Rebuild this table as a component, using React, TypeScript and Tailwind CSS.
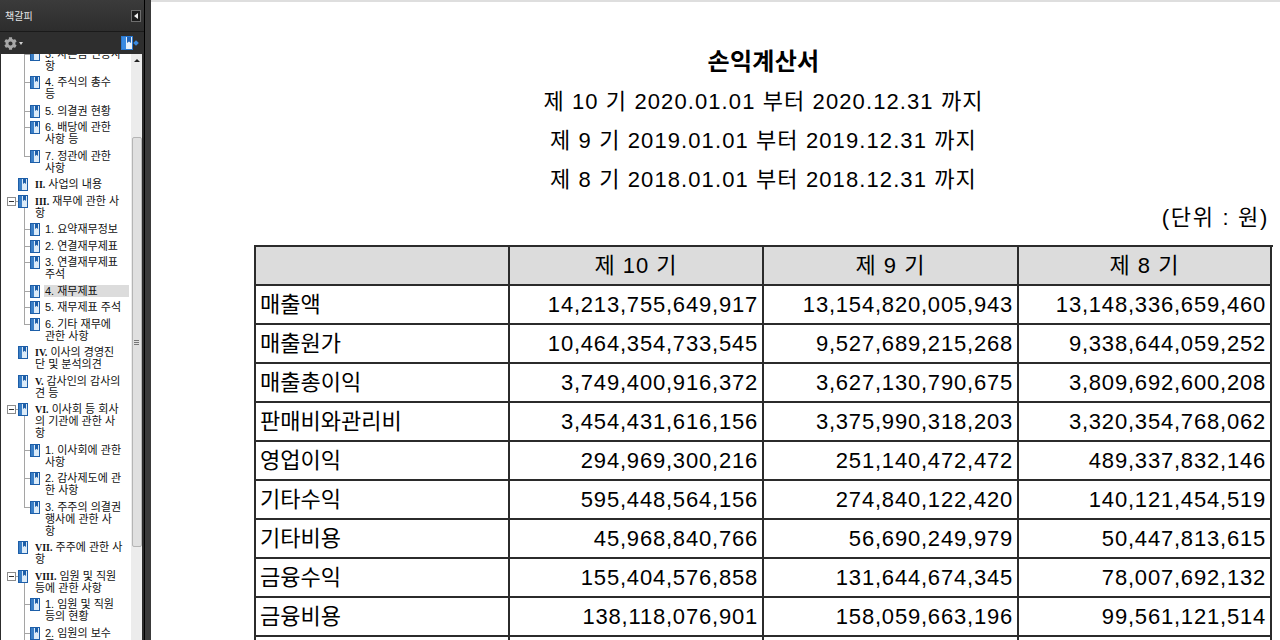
import { FaCog } from "react-icons/fa";

type Node = {
  lv: 1 | 2;
  lines: string[];
  roman?: string;
  exp?: boolean;
  sel?: boolean;
  last?: boolean;
};

const tree: Node[] = [
  { lv: 2, lines: ["3. 자본금 변동사", "항"] },
  { lv: 2, lines: ["4. 주식의 총수", "등"] },
  { lv: 2, lines: ["5. 의결권 현황"] },
  { lv: 2, lines: ["6. 배당에 관한", "사항 등"] },
  { lv: 2, lines: ["7. 정관에 관한", "사항"], last: true },
  { lv: 1, roman: "II.", lines: [" 사업의 내용"] },
  { lv: 1, roman: "III.", lines: [" 재무에 관한 사", "항"], exp: true },
  { lv: 2, lines: ["1. 요약재무정보"] },
  { lv: 2, lines: ["2. 연결재무제표"] },
  { lv: 2, lines: ["3. 연결재무제표", "주석"] },
  { lv: 2, lines: ["4. 재무제표"], sel: true },
  { lv: 2, lines: ["5. 재무제표 주석"] },
  { lv: 2, lines: ["6. 기타 재무에", "관한 사항"], last: true },
  { lv: 1, roman: "IV.", lines: [" 이사의 경영진", "단 및 분석의견"] },
  { lv: 1, roman: "V.", lines: [" 감사인의 감사의", "견 등"] },
  { lv: 1, roman: "VI.", lines: [" 이사회 등 회사", "의 기관에 관한 사", "항"], exp: true },
  { lv: 2, lines: ["1. 이사회에 관한", "사항"] },
  { lv: 2, lines: ["2. 감사제도에 관", "한 사항"] },
  { lv: 2, lines: ["3. 주주의 의결권", "행사에 관한 사", "항"], last: true },
  { lv: 1, roman: "VII.", lines: [" 주주에 관한 사", "항"] },
  { lv: 1, roman: "VIII.", lines: [" 임원 및 직원", "등에 관한 사항"], exp: true },
  { lv: 2, lines: ["1. 임원 및 직원", "등의 현황"] },
  { lv: 2, lines: ["2. 임원의 보수", "등"] },
  { lv: 2, lines: ["3. 임원의 주식매", "수선택권"] },
];

const rows = [
  ["매출액", "14,213,755,649,917", "13,154,820,005,943", "13,148,336,659,460"],
  ["매출원가", "10,464,354,733,545", "9,527,689,215,268", "9,338,644,059,252"],
  ["매출총이익", "3,749,400,916,372", "3,627,130,790,675", "3,809,692,600,208"],
  ["판매비와관리비", "3,454,431,616,156", "3,375,990,318,203", "3,320,354,768,062"],
  ["영업이익", "294,969,300,216", "251,140,472,472", "489,337,832,146"],
  ["기타수익", "595,448,564,156", "274,840,122,420", "140,121,454,519"],
  ["기타비용", "45,968,840,766", "56,690,249,979", "50,447,813,615"],
  ["금융수익", "155,404,576,858", "131,644,674,345", "78,007,692,132"],
  ["금융비용", "138,118,076,901", "158,059,663,196", "99,561,121,514"],
  ["법인세비용차감전순이익", "851,733,412,854", "341,875,262,846", "761,436,152,286"],
];

const BookIcon = () => (
  <div className="h-[12px] w-[10px] shrink-0 overflow-visible">
    <svg width="10" height="13" viewBox="0 0 10 13">
      <rect x="0.5" y="0.5" width="9" height="12" fill="#dcebf8" stroke="#1d5ea8" />
      <rect x="1" y="1" width="3" height="11" fill="#3b7fc6" />
      <path d="M5 1h3v5l-1.5-1.2L5 6z" fill="#1d5ea8" />
    </svg>
  </div>
);

const TreeRow = ({ n }: { n: Node }) => (
  <div className="relative flex pt-[2px] pb-[2.5px]">
    {n.lv === 2 && (
      <>
        <span
          className={
            n.last
              ? "absolute left-[23px] top-0 h-[8px] w-px bg-[#a5a5a5]"
              : "absolute left-[23px] top-0 bottom-0 w-px bg-[#a5a5a5]"
          }
        />
        <span className="absolute left-[23px] top-[8px] h-px w-[6px] bg-[#a5a5a5]" />
      </>
    )}
    {n.exp && (
      <>
        <span className="absolute left-[6px] top-[4px] flex h-[9px] w-[9px] items-center justify-center border border-[#8c8c8c] bg-white">
          <span className="h-px w-[5px] bg-[#333]" />
        </span>
        <span className="absolute left-[15px] top-[8px] h-px w-[2px] bg-[#a5a5a5]" />
        <span className="absolute left-[23px] top-[15px] bottom-0 w-px bg-[#a5a5a5]" />
      </>
    )}
    <div className={n.lv === 1 ? "flex gap-[6px] pl-[17px]" : "flex w-full gap-[4px] pl-[29px]"}>
      <BookIcon />
      <div
        className={
          n.sel
            ? "mr-[2px] flex-1 bg-[#dcdcdc] pl-[1px]"
            : "flex-1 pl-[1px]"
        }
      >
        {n.lines.map((l, i) => (
          <div key={i} className="h-[12px] overflow-visible whitespace-pre leading-[12px]">
            {i === 0 && n.roman && (
              <span className="font-[Liberation_Serif,serif] text-[10px] font-bold">{n.roman}</span>
            )}
            {l}
          </div>
        ))}
      </div>
    </div>
  </div>
);

export default function App() {
  return (
    <div className="flex h-[640px] w-[1280px] overflow-hidden bg-white font-[Liberation_Sans,Noto_Sans_CJK_KR,sans-serif] text-black">
      <aside className="flex w-[145px] shrink-0 flex-col border-r border-black bg-[#2c2c2c]">
        <div className="flex h-[32px] shrink-0 items-center justify-between border-b border-[#1a1a1a] bg-gradient-to-b from-[#3b3b3b] to-[#2d2d2d] pl-[5px] pr-[3px]">
          <span className="pt-px text-[10px] text-[#e8e8e8]">책갈피</span>
          <span className="flex h-[12px] w-[10px] items-center justify-center border border-[#6e6e6e] bg-[#1c1c1c]">
            <span className="h-0 w-0 border-y-[3px] border-r-[4px] border-y-transparent border-r-[#f0f0f0]" />
          </span>
        </div>
        <div className="flex h-[22px] shrink-0 items-center justify-between bg-[#2e2e2e] pl-[4px] pr-[6px]">
          <div className="flex items-center gap-[2px]">
            <FaCog className="text-[13px] text-[#a8a8a8]" />
            <span className="h-0 w-0 border-x-[2px] border-t-[3px] border-x-transparent border-t-[#d0d0d0]" />
          </div>
          <div className="flex items-center gap-[1px]">
            <svg width="12" height="14" viewBox="0 0 12 14">
              <rect x="0.5" y="0.5" width="11" height="13" fill="#e6f0fa" stroke="#2a78d0" />
              <rect x="1" y="1" width="4" height="12" fill="#3a8ae0" />
              <path d="M6 1h4v6l-2-1.5L6 7z" fill="#1f62b5" />
            </svg>
            <span className="h-[4px] w-[4px] rotate-45 bg-[#3a8ae0]" />
          </div>
        </div>
        <div className="flex min-h-0 flex-1 pl-px pr-[2px]">
          <div className="w-[130px] overflow-hidden bg-white text-[11px] text-[#111]">
            <div className="-mt-[8.5px]">
              {tree.map((n, i) => (
                <TreeRow key={i} n={n} />
              ))}
            </div>
          </div>
          <div className="flex w-[11px] flex-col items-center bg-[#ececec]">
            <div className="flex h-[12px] items-center justify-center">
              <span className="h-0 w-0 border-x-[3px] border-b-[3px] border-x-transparent border-b-[#222]" />
            </div>
            <div className="h-[71px]" />
            <div className="flex h-[410px] w-[10px] items-center justify-center rounded-[2px] border border-[#b5b5b5] bg-[#e0e0e0]">
              <div className="flex flex-col gap-[1px]">
                <span className="h-px w-[5px] bg-[#777]" />
                <span className="h-px w-[5px] bg-[#777]" />
                <span className="h-px w-[5px] bg-[#777]" />
              </div>
            </div>
          </div>
        </div>
      </aside>
      <div className="w-[6px] shrink-0 bg-[#3a3a3a]" />
      <main className="flex-1 border-t-2 border-[#dedede] pt-[40px]">
        <div className="ml-[103px] w-[1019px]">
          <h1 className="h-[40px] text-center text-[24px] font-bold leading-[40px] tracking-[0.3px]">손익계산서</h1>
          <p className="h-[39px] text-center text-[22px] leading-[39px] tracking-[1.1px]">
            제 10 기 2020.01.01 부터 2020.12.31 까지
          </p>
          <p className="h-[39px] text-center text-[22px] leading-[39px] tracking-[1.1px]">
            제 9 기 2019.01.01 부터 2019.12.31 까지
          </p>
          <p className="h-[39px] text-center text-[22px] leading-[39px] tracking-[1.1px]">
            제 8 기 2018.01.01 부터 2018.12.31 까지
          </p>
          <p className="h-[37px] pr-[4px] text-right text-[22px] leading-[37px] tracking-[1.7px]">(단위 : 원)</p>
          <div className="mt-[9px] grid grid-cols-[254px_254px_255px_253px] border-l-2 border-t-2 border-[#2b2b2b] text-[22px]">
            <div className="h-[39px] border-b-2 border-r-2 border-[#2b2b2b] bg-[#dcdcdc]" />
            {["제 10 기", "제 9 기", "제 8 기"].map((h) => (
              <div
                key={h}
                className="flex h-[39px] items-center justify-center border-b-2 border-r-2 border-[#2b2b2b] bg-[#dcdcdc] tracking-[1px]"
              >
                {h}
              </div>
            ))}
            {rows.map((r) => (
              <div key={r[0]} className="contents">
                <div className="flex h-[39px] items-center border-b-2 border-r-2 border-[#2b2b2b] pl-[4px]">
                  {r[0]}
                </div>
                {r.slice(1).map((v, j) => (
                  <div
                    key={j}
                    className="flex h-[39px] items-center justify-end border-b-2 border-r-2 border-[#2b2b2b] pr-[4px] tracking-[0.8px]"
                  >
                    {v}
                  </div>
                ))}
              </div>
            ))}
          </div>
        </div>
      </main>
    </div>
  );
}
